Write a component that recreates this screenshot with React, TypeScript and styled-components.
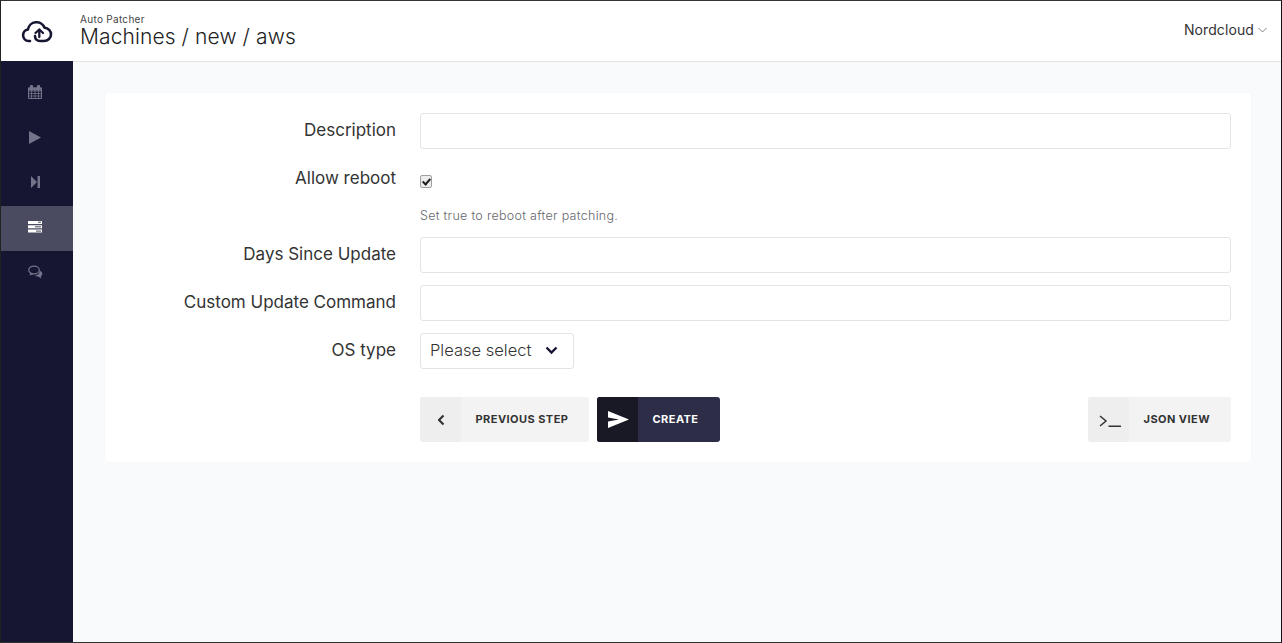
import React from 'react';
import styled, { createGlobalStyle } from 'styled-components';

const GlobalStyle = createGlobalStyle`
  html, body {
    margin: 0;
    padding: 0;
    height: 100%;
    overflow: hidden;
  }
  body {
    font-family: Inter, "Open Sans", "Liberation Sans", sans-serif;
    color: #333;
  }
`;

const Frame = styled.div`
  width: 1282px;
  height: 643px;
  box-sizing: border-box;
  border: 1px solid #333;
  border-left-color: #222;
  border-right-color: #111;
  display: flex;
  flex-direction: column;
  background: #f9fafc;
  overflow: hidden;
`;

const Header = styled.header`
  height: 60px;
  box-sizing: border-box;
  flex: none;
  background: #fff;
  display: flex;
  align-items: center;
  padding-right: 14px;
`;

const LogoBox = styled.div`
  width: 72px;
  display: flex;
  justify-content: center;
  flex: none;
  padding-right: 1px;
  box-sizing: border-box;
`;

const Titles = styled.div`
  margin-left: 7px;
  flex: 1;
`;

const AppName = styled.div`
  font-size: 10px;
  line-height: 11px;
  letter-spacing: 0.3px;
  color: #444;
`;

const PageTitle = styled.div`
  font-size: 21px;
  line-height: 24px;
  font-weight: 300;
  color: #222;
  letter-spacing: 0.1px;
`;

const UserMenu = styled.div`
  display: flex;
  align-items: center;
  gap: 4px;
  font-size: 14px;
  font-weight: 400;
  letter-spacing: 0.1px;
  color: #333;
  margin-top: -3px;
`;

const Body = styled.div`
  flex: 1;
  display: flex;
  min-height: 0;
`;

const Sidebar = styled.nav`
  width: 72px;
  flex: none;
  background: #161633;
  padding-top: 10px;
`;

const NavItem = styled.div<{ $active?: boolean }>`
  height: 45px;
  box-sizing: border-box;
  padding: 0 4px 3px 0;
  display: flex;
  align-items: center;
  justify-content: center;
  background: ${p => (p.$active ? '#4a4a60' : 'transparent')};
  color: ${p => (p.$active ? '#fff' : '#73738a')};
`;

const Main = styled.main`
  flex: 1;
  border-top: 1px solid #e4e4e6;
  padding: 31px 30px 0 32px;
`;

const Card = styled.section`
  background: #fff;
  border-radius: 4px;
  box-shadow: 0 0 2px rgba(30, 30, 60, 0.04);
  padding: 20px 20px 20px 0;
`;

const Row = styled.div`
  display: grid;
  grid-template-columns: 291px 1fr;
  column-gap: 24px;
  margin-bottom: 12px;
`;

const Label = styled.label`
  font-size: 17px;
  line-height: 34px;
  text-align: right;
  color: #333;
`;

const TextInput = styled.input`
  box-sizing: border-box;
  width: 100%;
  height: 36px;
  border: 1px solid #e4e4e6;
  border-radius: 3px;
  background: #fff;
  outline: none;
`;

const CheckCell = styled.div`
  height: 36px;
  padding-top: 14px;
  box-sizing: border-box;
`;

const Check = styled.input`
  appearance: none;
  position: relative;
  margin: 0;
  width: 12px;
  height: 13px;
  box-sizing: border-box;
  display: block;
  background: #ededed;
  border: 1px solid #a0a0a0;
  border-radius: 2px;

  &::after {
    content: '';
    position: absolute;
    left: 3px;
    top: 1px;
    width: 3px;
    height: 6px;
    border: solid #222;
    border-width: 0 2px 2px 0;
    transform: rotate(42deg);
  }
`;

const Hint = styled.div`
  font-size: 12.5px;
  line-height: 14px;
  letter-spacing: 0.3px;
  font-weight: 300;
  color: #66666c;
  margin-top: 12px;
  margin-bottom: 2px;
  white-space: nowrap;
`;

const SelectBox = styled.div`
  box-sizing: border-box;
  width: 154px;
  height: 36px;
  border: 1px solid #e4e4e6;
  border-radius: 3px;
  display: flex;
  align-items: center;
  justify-content: space-between;
  padding: 0 15px 2px 9px;
  font-size: 16.500px;
  font-weight: 300;
  color: #333;
`;

const Actions = styled.div`
  display: flex;
  gap: 8px;
  margin-top: 28px;
  margin-left: 315px;
`;

const Spacer = styled.div`
  flex: 1;
`;

const Button = styled.button<{ $primary?: boolean }>`
  height: 45px;
  border: 0;
  padding: 0;
  border-radius: 3px;
  overflow: hidden;
  display: flex;
  align-items: stretch;
  background: ${p => (p.$primary ? '#2d2d47' : '#f3f3f3')};
  color: ${p => (p.$primary ? '#fff' : '#333')};
  font-family: inherit;
`;

const ButtonIcon = styled.span<{ $primary?: boolean }>`
  width: 41px;
  display: flex;
  align-items: center;
  justify-content: center;
  padding-left: 2px;
  box-sizing: border-box;
  background: ${p => (p.$primary ? '#191926' : '#eeeeee')};
`;

const ButtonText = styled.span<{ $w: number }>`
  width: ${p => p.$w}px;
  box-sizing: border-box;
  padding: 0 0 2px 14.500px;
  display: flex;
  align-items: center;
  font-size: 11px;
  font-weight: 700;
  letter-spacing: 0.45px;
`;

export default function App() {
  return (
    <>
      <GlobalStyle />
      <Frame>
        <Header>
          <LogoBox>
            <svg width="32" height="24" viewBox="0 0 32 24" fill="none" stroke="#161633" strokeWidth="2.600" strokeLinecap="round" strokeLinejoin="round">
              <path d="M9 22H7.500a5.800 5.800 0 0 1-.6-11.500A8.700 8.700 0 0 1 23.600 8.800 6.500 6.500 0 0 1 30 15.500C30 19 27 22 23 22h-4c-3 0-5-2-5-5" />
              <path d="M14.500 14l3.800-3.500L22 14" strokeWidth="2.300" />
              <path d="M18.300 11v7" strokeWidth="2.300" />
            </svg>
          </LogoBox>
          <Titles>
            <AppName>Auto Patcher</AppName>
            <PageTitle>Machines / new / aws</PageTitle>
          </Titles>
          <UserMenu>
            Nordcloud
            <svg width="9" height="6" viewBox="0 0 9 6" fill="none" stroke="#777" strokeWidth="0.900">
              <path d="M.5 1l4 4 4-4" />
            </svg>
          </UserMenu>
        </Header>
        <Body>
          <Sidebar>
            <NavItem>
              <svg width="14" height="14" viewBox="0 0 14 14" fill="none" stroke="currentColor" strokeWidth="1">
                <path d="M.5 3h13v10.500H.5z" />
                <path d="M.5 6h13M.5 8.500h13M.5 11h13M3.500 5v8M7 5v8M10.500 5v8" strokeWidth="0.800" />
                <path d="M2.500 0.500h2v3h-2zM9.500 0.500h2v3h-2z" fill="currentColor" />
                <path d="M.5 3h13v2H.5z" fill="currentColor" />
              </svg>
            </NavItem>
            <NavItem>
              <svg width="12" height="13" viewBox="0 0 12 13" fill="currentColor">
                <path d="M0 0l12 6.500L0 13z" />
              </svg>
            </NavItem>
            <NavItem>
              <svg width="9" height="12" viewBox="0 0 9 12" fill="currentColor">
                <path d="M0 0l6 6-6 6zM6.500 0H9v12H6.500z" />
              </svg>
            </NavItem>
            <NavItem $active>
              <svg width="14" height="12" viewBox="0 0 14 12">
                <path d="M0 0h14v3H0zM0 4.300h14v3H0zM0 8.600h14v3H0z" fill="currentColor" />
                <path d="M10 1.200h3M7 5.800h6M8 10.100h5" stroke="#4a4a60" strokeWidth="1" />
              </svg>
            </NavItem>
            <NavItem>
              <svg width="15" height="14" viewBox="0 0 15 14" fill="none" stroke="currentColor">
                <ellipse cx="6" cy="5" rx="5.300" ry="3.800" strokeWidth="1.200" />
                <path d="M3 8l-1 2 3-1.200" strokeWidth="1" />
                <path d="M11.500 5.500c2 .8 3 2 2.800 3.500-.1 1-.7 1.700-1.500 2.200l.7 2.300-3-1.800c-1.500 0-3-.4-4-1.200 3 0 5.500-2 5-5z" fill="currentColor" stroke="none" />
              </svg>
            </NavItem>
          </Sidebar>
          <Main>
            <Card>
              <Row>
                <Label>Description</Label>
                <TextInput />
              </Row>
              <Row>
                <Label>Allow reboot</Label>
                <div>
                  <CheckCell><Check type="checkbox" defaultChecked /></CheckCell>
                  <Hint>Set true to reboot after patching.</Hint>
                </div>
              </Row>
              <Row>
                <Label>Days Since Update</Label>
                <TextInput />
              </Row>
              <Row>
                <Label>Custom Update Command</Label>
                <TextInput />
              </Row>
              <Row>
                <Label>OS type</Label>
                <SelectBox>
                  Please select
                  <svg width="13" height="9" viewBox="0 0 13 9" fill="none" stroke="#161633" strokeWidth="2.400">
                    <path d="M1.500 1.500l5 5 5-5" />
                  </svg>
                </SelectBox>
              </Row>
              <Actions>
                <Button>
                  <ButtonIcon>
                    <svg width="8" height="12" viewBox="0 0 8 12" fill="none" stroke="#333" strokeWidth="2.200">
                      <path d="M5.500 1.500L1 6l4.500 4.500" />
                    </svg>
                  </ButtonIcon>
                  <ButtonText $w={128}>PREVIOUS STEP</ButtonText>
                </Button>
                <Button $primary>
                  <ButtonIcon $primary>
                    <svg width="21" height="17" viewBox="0 0 21 17" fill="#fff">
                      <path d="M0 0l21 8.500L0 17l0-6.500 11-2-11-2z" />
                    </svg>
                  </ButtonIcon>
                  <ButtonText $w={82}>CREATE</ButtonText>
                </Button>
                <Spacer />
                <Button>
                  <ButtonIcon>
                    <svg width="22" height="14" viewBox="0 0 22 14" fill="none" stroke="#333" strokeWidth="1.500">
                      <path d="M1 3l6 5-6 5" />
                      <path d="M9.500 13.300H22" />
                    </svg>
                  </ButtonIcon>
                  <ButtonText $w={102}>JSON VIEW</ButtonText>
                </Button>
              </Actions>
            </Card>
          </Main>
        </Body>
      </Frame>
    </>
  );
}
